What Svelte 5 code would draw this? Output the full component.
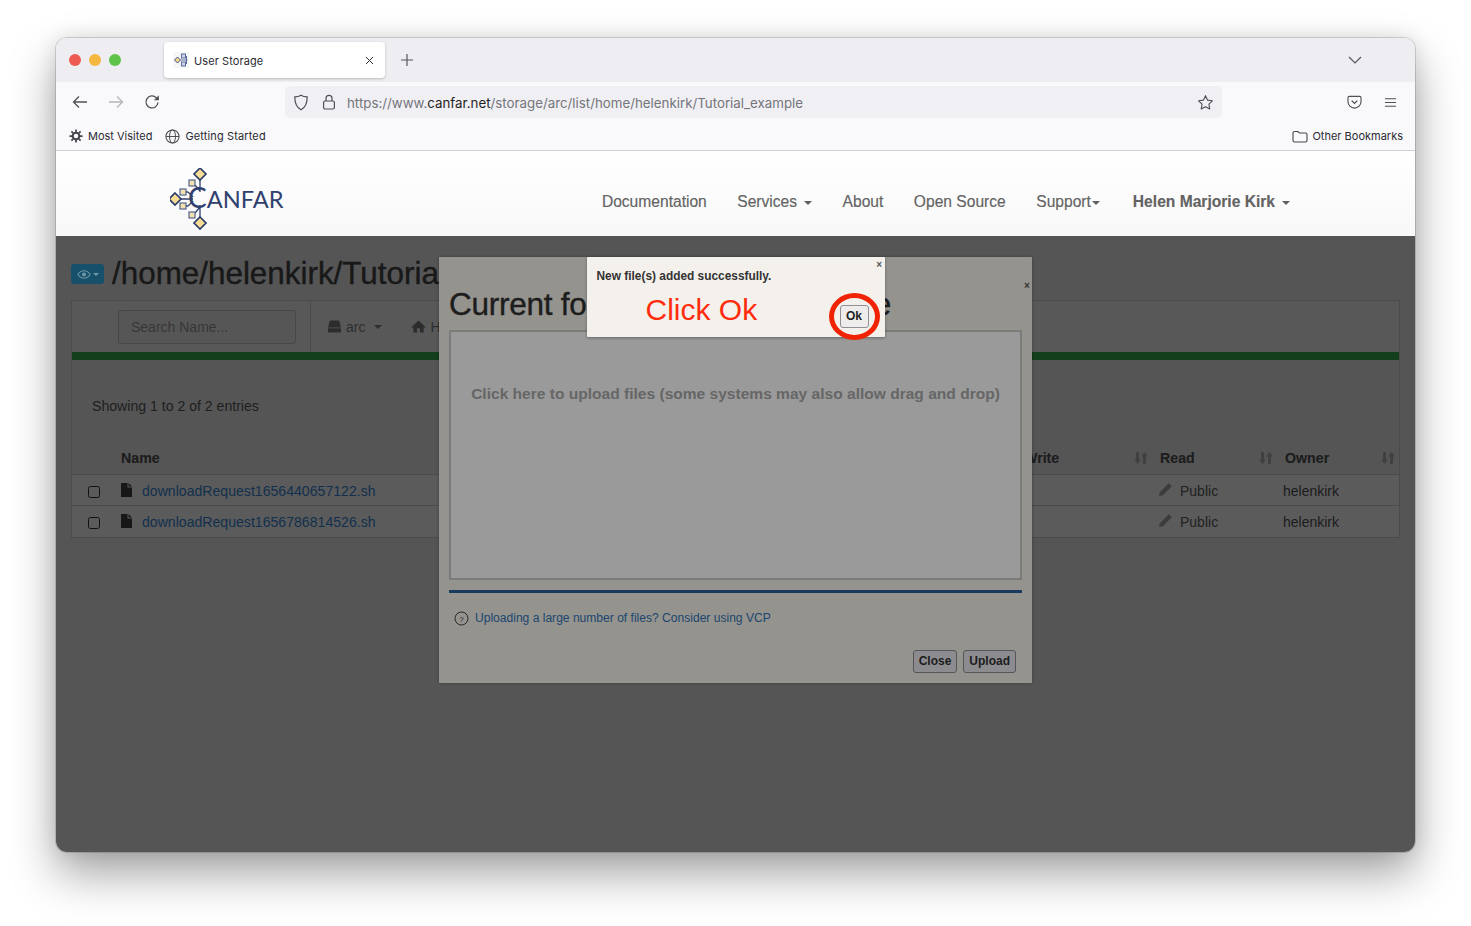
<script>
  const rows = ['downloadRequest1656440657122.sh', 'downloadRequest1656786814526.sh'];
  const sortCols = ['Write', 'Read', 'Owner'];
  const navItems = [
    { label: 'Documentation' },
    { label: 'Services', caret: true },
    { label: 'About' },
    { label: 'Open Source' },
    { label: 'Support', caret: true, tight: true },
    { label: 'Helen Marjorie Kirk', caret: true, strong: true }
  ];
  const diamonds = [[30, 6], [30, 55], [5, 31]];
  const squares = [[22, 15], [13, 24], [13, 38], [22, 47]];
</script>

<div class="window">
  <header class="tabbar">
    <div class="lights">
      <span class="light red"></span><span class="light amber"></span><span class="light green"></span>
    </div>
    <div class="tab">
      <svg class="favicon" viewBox="0 0 16 16" width="16" height="16">
        <rect x="0" y="0" width="16" height="16" fill="#f7f7f8"/>
        <path d="M1.500 8l3-3 3 3-3 3z" fill="#f4d98a" stroke="#3b4f86"/>
        <rect x="8.500" y="2" width="4" height="4" fill="#cfd6e8" stroke="#5a6c9c"/>
        <rect x="8.500" y="10" width="4" height="4" fill="#cfd6e8" stroke="#5a6c9c"/>
        <path d="M7.500 8h7M13.500 4v8" fill="none" stroke="#5a6c9c"/>
      </svg>
      <span class="tabtitle">User Storage</span>
      <svg class="tabclose" viewBox="0 0 10 10" width="9" height="9"><path d="M1 1l8 8M9 1l-8 8" stroke="#2b2a33" stroke-width="1.100"/></svg>
    </div>
    <svg class="newtab" viewBox="0 0 12 12" width="12" height="12"><path d="M6 0v12M0 6h12" stroke="#55555c" stroke-width="1.200"/></svg>
    <svg class="tabs-menu" viewBox="0 0 14 8" width="14" height="8"><path d="M1 1l6 6 6-6" fill="none" stroke="#55555c" stroke-width="1.200"/></svg>
  </header>

  <div class="toolbar">
    <div class="navbtns">
      <svg viewBox="0 0 16 14" width="16" height="14"><path d="M15 7H1.500M7 1.500L1.500 7 7 12.500" fill="none" stroke="#4f4f56" stroke-width="1.300"/></svg>
      <svg viewBox="0 0 16 14" width="16" height="14"><path d="M1 7h13.500M9 1.500L14.500 7 9 12.500" fill="none" stroke="#b5b5ba" stroke-width="1.300"/></svg>
      <svg viewBox="0 0 16 16" width="16" height="16"><path d="M14 8.500A6 6 0 1 1 12.200 3.600L14.500 5.600" fill="none" stroke="#4f4f56" stroke-width="1.300"/><path d="M14.800 1.200v5h-5z" fill="#4f4f56"/></svg>
    </div>
    <div class="urlbar">
      <svg viewBox="0 0 16 17" width="16" height="17"><path d="M8 1.200c2 1.200 4 1.600 6.200 1.700 0 5.600-1.600 10.400-6.200 12.900C3.400 13.300 1.800 8.500 1.800 2.900 4 2.800 6 2.400 8 1.200z" fill="none" stroke="#4f4f56" stroke-width="1.200"/></svg>
      <svg viewBox="0 0 14 16" width="14" height="16"><rect x="1.600" y="7" width="10.800" height="8" rx="1.500" fill="none" stroke="#4f4f56" stroke-width="1.200"/><path d="M4 7V4.300a3 3 0 0 1 6 0V7" fill="none" stroke="#4f4f56" stroke-width="1.200"/></svg>
      <span class="url"><span class="dim">https://www.</span>canfar.net<span class="dim">/storage/arc/list/home/helenkirk/Tutorial_example</span></span>
      <svg class="star" viewBox="0 0 18 18" width="17" height="17"><path d="M9 1.800l2.200 4.700 5.100.7-3.700 3.500.9 5.100L9 13.400l-4.500 2.400.9-5.100-3.700-3.500 5.100-.7z" fill="none" stroke="#4f4f56" stroke-width="1.200" stroke-linejoin="round"/></svg>
    </div>
    <div class="toolright">
      <svg viewBox="0 0 16 15" width="15" height="14"><path d="M2.500 1.500h11a1.500 1.500 0 0 1 1.500 1.500v4a7 7 0 0 1-14 0V3a1.500 1.500 0 0 1 1.500-1.500z" fill="none" stroke="#4f4f56" stroke-width="1.200"/><path d="M5 6l3 3 3-3" fill="none" stroke="#4f4f56" stroke-width="1.400"/></svg>
      <svg viewBox="0 0 14 11" width="13" height="11"><path d="M1 1.500h12M1 5.500h12M1 9.500h12" stroke="#4f4f56" stroke-width="1.100"/></svg>
    </div>
  </div>

  <div class="bookmarks">
    <span class="bm">
      <svg viewBox="0 0 16 16" width="14" height="14"><circle cx="8" cy="8" r="3.800" fill="none" stroke="#45454c" stroke-width="2.400"/><path d="M8 .5v3M8 12.500v3M.5 8h3M12.500 8h3M2.700 2.700l2.100 2.100M11.200 11.200l2.100 2.100M13.300 2.700l-2.100 2.100M4.800 11.200l-2.100 2.100" stroke="#45454c" stroke-width="2"/></svg>
      Most Visited
    </span>
    <span class="bm wide">
      <svg viewBox="0 0 16 16" width="15" height="15"><circle cx="8" cy="8" r="7" fill="none" stroke="#45454c" stroke-width="1.100"/><ellipse cx="8" cy="8" rx="3.200" ry="7" fill="none" stroke="#45454c" stroke-width="1"/><path d="M1 8h14" stroke="#45454c" stroke-width="1"/></svg>
      Getting Started
    </span>
    <span class="bm other">
      <svg viewBox="0 0 16 13" width="16" height="13"><path d="M1 3a1.500 1.500 0 0 1 1.500-1.500h3.300L7.500 3h6A1.500 1.500 0 0 1 15 4.500v6a1.500 1.500 0 0 1-1.500 1.500h-11A1.500 1.500 0 0 1 1 10.500z" fill="none" stroke="#45454c" stroke-width="1.100"/></svg>
      Other Bookmarks
    </span>
  </div>

  <nav class="sitenav">
    <svg class="logo" viewBox="0 0 116 62" width="116" height="62">
      <path d="M30 12v12M30 37v12M11 31h12M18 24l-4 0M18 38l-4 0M18 24l5 5M18 38l5-5M25 17l5 6M25 45l5-6" fill="none" stroke="#33426e" stroke-width="1.300"/>
      {#each diamonds as d}
        <path d={`M${d[0]} ${d[1]-6}l6 6-6 6-6-6z`} fill="#f7dd93" stroke="#2c3c6b" stroke-width="1.700"/>
      {/each}
      {#each squares as s}
        <rect x={s[0]-3} y={s[1]-3} width="6" height="6" fill="#f3e2ae" stroke="#54658f" stroke-width="1.200"/>
      {/each}
      <text class="logotext" x="18" y="39.500"><tspan class="logoc">C</tspan>ANFAR</text>
    </svg>
    <ul class="navlist">
      {#each navItems as item}
        <li class:strong={item.strong}>{item.label}{#if item.caret}<span class="navcaret" class:tight={item.tight}></span>{/if}</li>
      {/each}
    </ul>
  </nav>

  <main class="content">
    <div class="titlerow">
      <span class="eyebtn">
        <svg viewBox="0 0 16 10" width="14" height="9"><path d="M1 5c2-3 4.500-4.200 7-4.200S13 2 15 5c-2 3-4.500 4.200-7 4.200S3 8 1 5z" fill="none" stroke="#6d97a5" stroke-width="1.200"/><circle cx="8" cy="5" r="2.300" fill="#6d97a5"/></svg>
        <span class="eyecaret"></span>
      </span>
      <h1>/home/helenkirk/Tutorial_example</h1>
    </div>

    <section class="panel">
      <div class="paneltools">
        <div class="searchcell"><div class="search">Search Name...</div></div>
        <div class="crumbs">
          <svg viewBox="0 0 16 14" width="15" height="13"><path d="M3 .5h10L15 8H1z" fill="#2c2c2c"/><rect x="1" y="9" width="14" height="4.500" rx="1" fill="#2c2c2c"/></svg>
          <span>arc</span><span class="crumbcaret"></span>
          <svg class="home" viewBox="0 0 16 14" width="15" height="13"><path d="M8 .5L16 8h-2.500v5.500H9.500V9h-3v4.500H2.500V8H0z" fill="#2c2c2c"/></svg>
          <span>Home</span>
        </div>
      </div>
      <div class="greenbar"></div>
      <p class="entries">Showing 1 to 2 of 2 entries</p>
      <div class="thead">
        <div class="th name">Name</div>
        {#each sortCols as col}
          <div class="th sortable">
            <span>{col}</span>
            <svg viewBox="0 0 14 14" width="14" height="14"><path d="M2 1h3v7.500h2L3.500 13 0 8.500h2zM9 13h3V5.500h2L10.500 1 7 5.500h2z" fill="#404040"/></svg>
          </div>
        {/each}
      </div>
      {#each rows as row, i}
        <div class="tr" class:first={i === 0}>
          <span class="check"></span>
          <svg class="doc" viewBox="0 0 11 14" width="11" height="14"><path d="M0 0h6.500v4.500H11V14H0zM7.500 0L11 3.500H7.500z" fill="#171717"/></svg>
          <a class="file" href="#top">{row}</a>
          <div class="readcell">
            <svg viewBox="0 0 16 16" width="15" height="15"><path d="M1 15l1-4.200L11.500 1.300l3.200 3.200L5.200 14z" fill="#3c3c3c"/></svg>
            <span>Public</span>
          </div>
          <div class="ownercell">helenkirk</div>
        </div>
      {/each}
    </section>
  </main>

  <div class="uploadmodal">
    <span class="modalx">×</span>
    <h2>Current folder: Tutorial_example</h2>
    <div class="dropzone">Click here to upload files (some systems may also allow drag and drop)</div>
    <div class="progress"></div>
    <div class="vcp">
      <svg viewBox="0 0 15 15" width="15" height="15"><circle cx="7.500" cy="7.500" r="6.500" fill="none" stroke="#2a2a2a"/><text x="7.500" y="10.500" class="qmark">?</text></svg>
      <span>Uploading a large number of files? Consider using VCP</span>
    </div>
    <div class="modalbtns">
      <span class="btn">Close</span><span class="btn">Upload</span>
    </div>
  </div>

  <div class="alert">
    <span class="alertx">×</span>
    <p>New file(s) added successfully.</p>
    <div class="alertrow">
      <span class="clickok">Click Ok</span>
      <span class="okwrap"><span class="okbtn">Ok</span></span>
    </div>
  </div>
</div>

<style>
  :global(body) {
    margin: 0;
    background: #fff;
    font-family: "Liberation Sans", Arial, sans-serif;
  }
  .window {
    position: relative;
    width: 1359px;
    height: 814px;
    margin: 38px 0 74px 56px;
    border-radius: 11px;
    overflow: hidden;
    display: flex;
    flex-direction: column;
    box-shadow: 0 0 0 1px rgba(0, 0, 0, .14), 0 22px 46px rgba(0, 0, 0, .36), 0 0 20px rgba(0, 0, 0, .1);
  }
  .tabbar {
    height: 44px;
    background: #eeeef2;
    display: flex;
    align-items: center;
    flex: none;
  }
  .lights { display: flex; gap: 8px; margin-left: 13px; width: 95px; }
  .light { width: 12px; height: 12px; border-radius: 50%; }
  .red { background: #ee5b53; }
  .amber { background: #f5b73f; }
  .green { background: #5fc34a; }
  .tab {
    width: 221px;
    height: 36px;
    background: #fff;
    border-radius: 4px;
    box-shadow: 0 1px 3px rgba(0, 0, 0, .22);
    display: flex;
    align-items: center;
    padding: 0 11px 0 9px;
    box-sizing: border-box;
  }
  .tabtitle { font: 11px Inter, sans-serif; letter-spacing: .08px; color: #2b2a33; margin-left: 5px; margin-top: 1px; flex: 1; }
  .newtab { margin-left: 16px; }
  .tabs-menu { margin-left: auto; margin-right: 53px; }
  .toolbar {
    height: 40px;
    background: #f9f9fb;
    display: flex;
    align-items: center;
    flex: none;
  }
  .navbtns { display: flex; align-items: center; gap: 20px; margin-left: 16px; width: 213px; }
  .urlbar {
    width: 937px;
    height: 32px;
    background: #f0f0f4;
    border-radius: 5px;
    display: flex;
    align-items: center;
    gap: 13px;
    padding: 0 8px;
    box-sizing: border-box;
  }
  .url { font: 13.300px Inter, sans-serif; color: #1f1f23; flex: 1; margin-left: -2px; margin-top: 1px; }
  .dim { color: #75757b; }
  .toolright { display: flex; align-items: center; gap: 22px; margin-left: 125px; }
  .bookmarks {
    height: 28px;
    background: #f9f9fb;
    border-bottom: 1px solid #d0d0d2;
    display: flex;
    align-items: center;
    gap: 13px;
    padding: 0 12px 0 13px;
    flex: none;
  }
  .bm { display: flex; align-items: center; gap: 5px; font: 11px Inter, sans-serif; color: #2b2a33; }
  .bm.wide { letter-spacing: .13px; }
  .bm.other { margin-left: auto; gap: 4px; }
  .sitenav {
    height: 85px;
    flex: none;
    background: linear-gradient(#fff, #f8f8f8);
    display: flex;
    align-items: center;
    justify-content: space-between;
    padding: 0 125px 0 114px;
    box-sizing: border-box;
  }
  .logo { margin-top: 10px; }
  .logotext { font: 23.600px Lato, sans-serif; fill: #2f3f6e; }
  .logoc { font-size: 28px; }
  .navlist {
    list-style: none;
    display: flex;
    gap: 30.500px;
    margin: 16px 0 0;
    padding: 0;
    font-size: 15.600px;
    color: #636363;
  }
  .navlist li { -webkit-text-stroke: .15px #636363; }
  .navlist li.strong { font-weight: bold; margin-left: 2.500px; }
  .navcaret {
    display: inline-block;
    width: 0;
    height: 0;
    border: 4px solid transparent;
    border-top-color: #5f5f5f;
    border-bottom: 0;
    margin-left: 7px;
    vertical-align: 2px;
  }
  .navcaret.tight { margin-left: 1px; }
  .content {
    flex: 1;
    background: #555;
    padding: 28px 15px 0 15px;
    box-sizing: border-box;
  }
  .titlerow { display: flex; align-items: center; height: 20px; gap: 8px; }
  .eyebtn {
    width: 33px;
    height: 20px;
    border-radius: 3px;
    background: #17506a;
    display: flex;
    align-items: center;
    justify-content: center;
    gap: 2px;
    flex: none;
  }
  .eyecaret { border: 3px solid transparent; border-top-color: #6d97a5; border-bottom: 0; }
  h1 {
    margin: 0;
    font-size: 31.400px;
    font-weight: normal;
    color: #181818;
    white-space: nowrap;
    -webkit-text-stroke: .4px #181818;
  }
  .panel {
    margin-top: 16px;
    border: 1px solid #4b4b4b;
    height: 238px;
    box-sizing: border-box;
  }
  .paneltools {
    height: 51px;
    background: #585858;
    display: flex;
    align-items: stretch;
  }
  .searchcell { width: 239px; border-right: 1px solid #4b4b4b; padding: 9px 0 0 46px; box-sizing: border-box; }
  .search {
    width: 178px;
    height: 34px;
    box-sizing: border-box;
    border: 1px solid #474747;
    border-radius: 3px;
    background: #565656;
    color: #363636;
    font-size: 14px;
    line-height: 32px;
    padding-left: 12px;
  }
  .crumbs {
    display: flex;
    align-items: center;
    gap: 4px;
    font-size: 14px;
    color: #2e2e2e;
    padding-left: 16px;
  }
  .crumbcaret { border: 4px solid transparent; border-top-color: #2e2e2e; border-bottom: 0; margin-left: 5px; }
  .home { margin-left: 25px; }
  .greenbar { height: 8px; background: #143f1c; }
  .entries { margin: 38px 0 0 20px; font-size: 14.100px; color: #1e1e1e; height: 16px; line-height: 16px; }
  .thead {
    display: grid;
    grid-template-columns: 1fr 136px 125px 116px;
    height: 33px;
    margin-top: 28px;
    padding-bottom: 1px;
    align-items: center;
    border-bottom: 1px solid #4b4b4b;
    box-sizing: border-box;
  }
  .th { font-size: 14.200px; font-weight: bold; color: #1c1c1c; -webkit-text-stroke: .1px #1c1c1c; }
  .th.name { padding-left: 49px; }
  .th.sortable { display: flex; justify-content: space-between; padding: 0 10px 0 2px; align-items: center; }
  .th.sortable:last-child { padding-right: 4px; }
  .tr {
    height: 31px;
    display: grid;
    grid-template-columns: 49px 21px 1fr 125px 116px;
    align-items: center;
    background: #5b5b5b;
    border-bottom: 1px solid #4b4b4b;
    box-sizing: border-box;
    font-size: 14px;
    color: #1e1e1e;
  }
  .tr.first { padding-top: 1px; }
  .tr:last-child { border-bottom: 0; }
  .check {
    width: 10px;
    height: 10px;
    border: 1px solid #111;
    border-radius: 2.500px;
    margin: 2px 0 0 16px;
  }
  .doc { margin-top: -2px; }
  .file { color: #12304d; text-decoration: none; font-size: 14.100px; }
  .readcell { display: flex; align-items: center; gap: 7px; color: #222; }
  .readcell svg { margin-top: -3px; }
  .ownercell { color: #1c1c1c; }
  .uploadmodal {
    position: absolute;
    left: 383px;
    top: 219px;
    width: 593px;
    height: 426px;
    background: #94938e;
    box-shadow: 0 0 3px rgba(0, 0, 0, .3);
    padding: 30px 10px 0;
    box-sizing: border-box;
  }
  .modalx { position: absolute; left: 585px; top: 23px; font-size: 10px; font-weight: bold; color: #333; }
  h2 {
    margin: 0;
    height: 43px;
    font-size: 31.500px;
    line-height: 34px;
    font-weight: normal;
    letter-spacing: -.25px;
    color: #1d1d1d;
    white-space: nowrap;
    -webkit-text-stroke: .4px #1d1d1d;
  }
  .dropzone {
    height: 250px;
    box-sizing: border-box;
    border: 2px solid #7b7b7b;
    background: #9a9a9a;
    text-align: center;
    font-size: 15.550px;
    font-weight: bold;
    color: #666;
    padding-top: 52px;
    line-height: 20px;
  }
  .progress { height: 3px; margin-top: 10px; background: #183a5c; }
  .vcp {
    display: flex;
    align-items: center;
    gap: 6px;
    margin: 17px 0 0 5px;
    font-size: 12.070px;
    color: #1b466f;
    height: 16px;
  }
  .qmark { font: 8px "Liberation Sans", sans-serif; fill: #2a2a2a; text-anchor: middle; }
  .modalbtns { display: flex; justify-content: flex-end; gap: 6px; margin: 24px 6px 0 0; }
  .btn {
    height: 23px;
    box-sizing: border-box;
    border: 1px solid #55555a;
    border-radius: 3px;
    background: #8c8c90;
    padding: 0 5px;
    font-size: 12px;
    font-weight: bold;
    color: #1d1d1d;
    line-height: 21px;
  }
  .alert {
    position: absolute;
    left: 531px;
    top: 219px;
    width: 298px;
    height: 80px;
    background: #f4f1ed;
    box-shadow: 0 1px 3px rgba(0, 0, 0, .35);
    padding: 12px 10px 0 9.500px;
    box-sizing: border-box;
    border-radius: 1px;
  }
  .alert p { margin: 0; font-size: 11.900px; font-weight: bold; color: #333; line-height: 14px; }
  .alertx { position: absolute; right: 3px; top: 2px; font-size: 10px; font-weight: bold; color: #555; }
  .alertrow { position: relative; height: 40px; }
  .clickok {
    position: absolute;
    left: 49px;
    top: 9px;
    font-size: 30px;
    line-height: 36px;
    color: #ff2d0e;
  }
  .okwrap {
    position: absolute;
    left: 232px;
    top: 10px;
    width: 51px;
    height: 47px;
    box-sizing: border-box;
    border: 5px solid #f02405;
    border-radius: 50%;
    display: flex;
    align-items: center;
    justify-content: center;
  }
  .okbtn {
    flex: none;
    width: 29px;
    height: 23px;
    box-sizing: border-box;
    border: 1px solid #8f8f96;
    border-radius: 3px;
    background: #eeedec;
    font-size: 12px;
    font-weight: bold;
    color: #222;
    text-align: center;
    line-height: 21px;
  }
</style>
